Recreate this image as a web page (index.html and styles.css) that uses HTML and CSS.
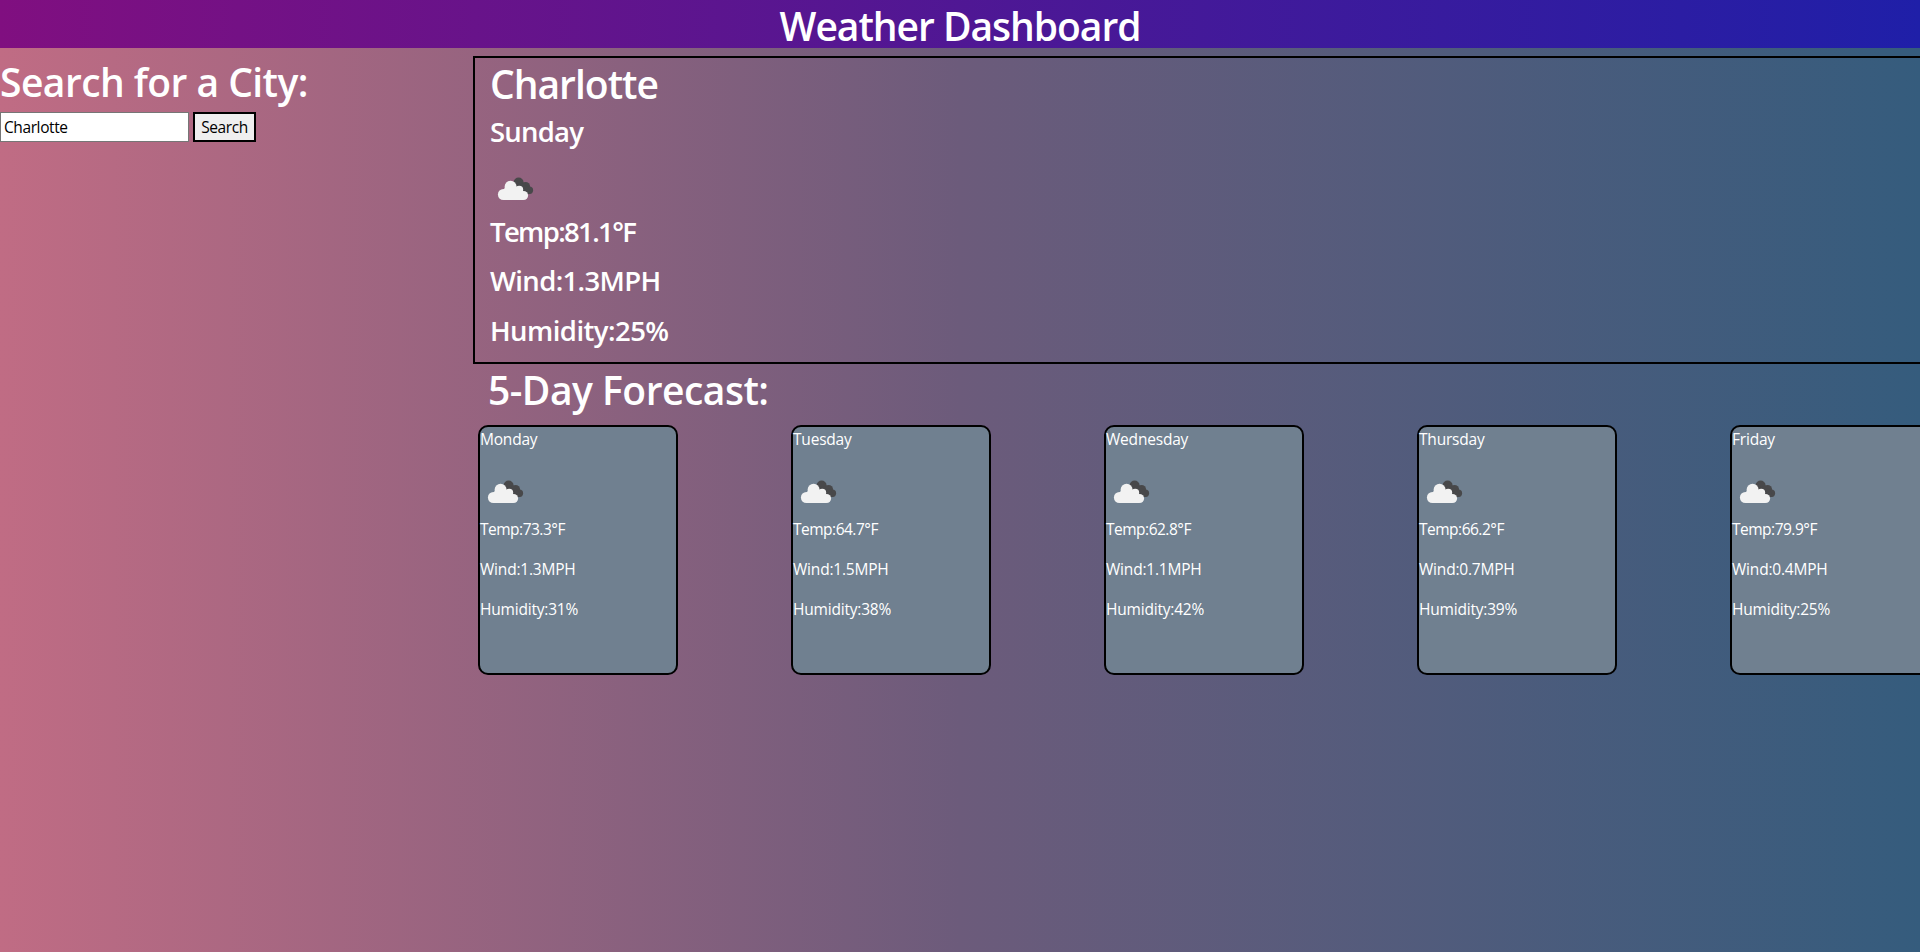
FILE: index.html
```html
<!DOCTYPE html>
<html lang="en">
<head>
<meta charset="utf-8">
<title>Weather Dashboard</title>
<link rel="stylesheet" href="styles.css">
</head>
<body>
<svg class="sprite" aria-hidden="true">
  <symbol id="clouds" viewBox="0 0 50 50">
    <g fill="#48484a">
      <circle cx="28.6" cy="18.6" r="5"/>
      <circle cx="35.6" cy="22.4" r="4.5"/>
      <circle cx="39.4" cy="26.2" r="3.7"/>
      <path d="M25 21 34 18.5 42 29 38 30 28 28z"/>
    </g>
    <g fill="#f2f2f2">
      <circle cx="20.6" cy="22.7" r="6"/>
      <circle cx="29.2" cy="25.8" r="4"/>
      <circle cx="13.4" cy="30.5" r="5.5"/>
      <circle cx="33.6" cy="31.5" r="4.5"/>
      <path d="M13.4 36V26L16 22H25L33 27V36z"/>
    </g>
  </symbol>
</svg>
<header class="banner"><h1 class="banner-title">Weather Dashboard</h1></header>
<main class="layout">
  <section class="search">
    <h1 class="search-title">Search for a City:</h1>
    <form class="search-form">
      <input class="search-input" type="text" value="Charlotte">
      <button class="search-button" type="button">Search</button>
    </form>
  </section>
  <section class="results">
    <div class="current">
      <h1 class="city">Charlotte</h1>
      <h3 class="day">Sunday</h3>
      <svg class="icon"><use href="#clouds"/></svg>
      <h3 class="temp">Temp:81.1°F</h3>
      <h3 class="wind">Wind:1.3MPH</h3>
      <h3 class="humidity">Humidity:25%</h3>
    </div>
    <h1 class="forecast-title">5-Day Forecast:</h1>
    <div class="forecast">
      <article class="card"><p>Monday</p><svg class="icon"><use href="#clouds"/></svg><p class="card-temp">Temp:73.3°F</p><p>Wind:1.3MPH</p><p>Humidity:31%</p></article>
      <article class="card"><p>Tuesday</p><svg class="icon"><use href="#clouds"/></svg><p class="card-temp">Temp:64.7°F</p><p>Wind:1.5MPH</p><p>Humidity:38%</p></article>
      <article class="card"><p>Wednesday</p><svg class="icon"><use href="#clouds"/></svg><p class="card-temp">Temp:62.8°F</p><p>Wind:1.1MPH</p><p>Humidity:42%</p></article>
      <article class="card"><p>Thursday</p><svg class="icon"><use href="#clouds"/></svg><p class="card-temp">Temp:66.2°F</p><p>Wind:0.7MPH</p><p>Humidity:39%</p></article>
      <article class="card"><p>Friday</p><svg class="icon"><use href="#clouds"/></svg><p class="card-temp">Temp:79.9°F</p><p>Wind:0.4MPH</p><p>Humidity:25%</p></article>
    </div>
  </section>
</main>
</body>
</html>
```

FILE: styles.css
```css
*, *::before, *::after { box-sizing: border-box; }
body {
  margin: 0;
  min-height: 100vh;
  overflow: hidden;
  font: 400 15.5px/24px "Segoe UI", "Open Sans", "Noto Sans", sans-serif;
  color: #fff;
  background: linear-gradient(to left, #355c7d, #6c5b7b, #c06c84);
}
h1, h3, p { margin: 0; white-space: nowrap; }
h1 { font-size: 39px; line-height: 48px; font-weight: 600; padding-top: 2px; height: 48px; }
h3 { font-size: 27.5px; line-height: 33.6px; font-weight: 600; height: 33.6px; padding-top: 1px; margin-bottom: 16px; }
.sprite { display: none; }
.banner { height: 48px; text-align: center; background: linear-gradient(to right, #800f80, #1f1fa8); }
.banner-title { letter-spacing: -1.03px; }
.layout { display: flex; padding-top: 8px; overflow: hidden; }
.search { flex: 0 0 473px; }
.search-title { margin-bottom: 8px; letter-spacing: -0.55px; }
.search-form { display: flex; gap: 4px; }
.search-input {
  width: 189px; height: 30px; margin: 0; padding: 1px 3px;
  border: 1px solid #767676; background: #fff; color: #000;
  font: 400 15.5px "Segoe UI", "Open Sans", sans-serif; letter-spacing: -0.4px;
}
.search-button {
  width: 63px; height: 30px; padding: 0;
  border: 2px solid #000; background: #efefef; color: #000;
  font: 400 15.5px "Segoe UI", "Open Sans", sans-serif; letter-spacing: -0.4px;
}
.results { flex: 0 0 1570px; }
.current { height: 308px; border: 2px solid #000; padding-left: 15px; }
.city { margin-bottom: 8px; letter-spacing: -1px; }
.day { letter-spacing: -0.8px; }
.temp { letter-spacing: -1.65px; }
.wind { letter-spacing: -0.65px; }
.humidity { letter-spacing: -0.55px; }
.icon { display: block; width: 50px; height: 50px; }
.forecast-title { margin: 0 0 8px 15px; letter-spacing: -0.5px; }
.forecast { display: flex; gap: 113px; padding: 5px; }
.card {
  flex: 0 0 200px; height: 250px;
  border: 2px solid #000; border-radius: 10px; background: #708090;
}
.card p { margin-bottom: 16px; letter-spacing: -0.2px; }
.card .card-temp { letter-spacing: -0.5px; }
```
